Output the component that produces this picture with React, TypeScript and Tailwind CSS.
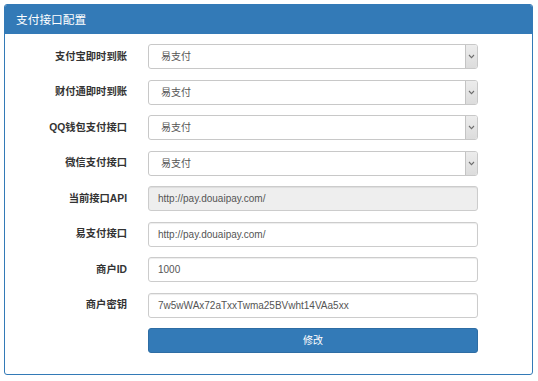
import React from 'react'

type Field =
  | { kind: 'select'; label: string; value: string }
  | { kind: 'input'; label: string; value: string; disabled?: boolean }

const FIELDS: Field[] = [
  { kind: 'select', label: '支付宝即时到账', value: '易支付' },
  { kind: 'select', label: '财付通即时到账', value: '易支付' },
  { kind: 'select', label: 'QQ钱包支付接口', value: '易支付' },
  { kind: 'select', label: '微信支付接口', value: '易支付' },
  { kind: 'input', label: '当前接口API', value: 'http://pay.douaipay.com/', disabled: true },
  { kind: 'input', label: '易支付接口', value: 'http://pay.douaipay.com/' },
  { kind: 'input', label: '商户ID', value: '1000' },
  { kind: 'input', label: '商户密钥', value: '7w5wWAx72aTxxTwma25BVwht14VAa5xx' },
]

const FONT = "font-['Liberation_Sans','Noto_Sans_CJK_SC',sans-serif]"

function FakeSelect({ value }: { value: string }) {
  return (
    <div className="flex h-full w-[330px] overflow-hidden rounded-[3px] border border-[#c8c8c8] bg-white">
      <span className="flex flex-1 items-center pl-[12px] text-[10px] text-[#555]">{value}</span>
      <div className="flex w-[12px] items-center justify-center border-l border-[#c4c4c4] bg-gradient-to-b from-[#ececec] to-[#dcdcdc]">
        <svg width="7" height="5" viewBox="0 0 7 5">
          <path d="M1 1 L3.5 3.6 L6 1" fill="none" stroke="#6f6f6f" strokeWidth="1.1" />
        </svg>
      </div>
    </div>
  )
}

export default function App() {
  return (
    <div className={`h-[381px] w-[538px] bg-white p-[4px] pr-[5px] ${FONT}`}>
      <div className="flex h-[371px] w-[529px] flex-col overflow-hidden rounded-[3px] border border-[#337ab7] bg-white">
        {/* Header */}
        <div className="flex h-[29px] shrink-0 items-center bg-[#337ab7] pl-[11px] text-[11.7px] text-white">
          支付接口配置
        </div>

        {/* Form */}
        <div className="mt-[10px] flex flex-col gap-[10.5px]">
          {FIELDS.map((f) => (
            <div key={f.label} className="flex h-[25px] items-center">
              <label className="w-[143px] shrink-0 pr-[21px] text-right text-[10.3px] font-bold text-[#333]">
                {f.label}
              </label>
              {f.kind === 'select' ? (
                <FakeSelect value={f.value} />
              ) : (
                <div
                  className={`flex h-full w-[330px] items-center rounded-[3px] border border-[#ccc] pl-[9px] text-[10px] text-[#555] shadow-[inset_0_1px_1px_rgba(0,0,0,0.075)] ${
                    f.disabled ? 'bg-[#eeeeee]' : 'bg-white'
                  }`}
                >
                  {f.value}
                </div>
              )}
            </div>
          ))}

          {/* Submit */}
          <div className="flex h-[25px] items-center">
            <div className="w-[143px] shrink-0" />
            <button
              type="button"
              className="h-full w-[330px] rounded-[3px] border border-[#2e6da4] bg-[#337ab7] text-[10px] text-white"
            >
              修改
            </button>
          </div>
        </div>
      </div>
    </div>
  )
}
